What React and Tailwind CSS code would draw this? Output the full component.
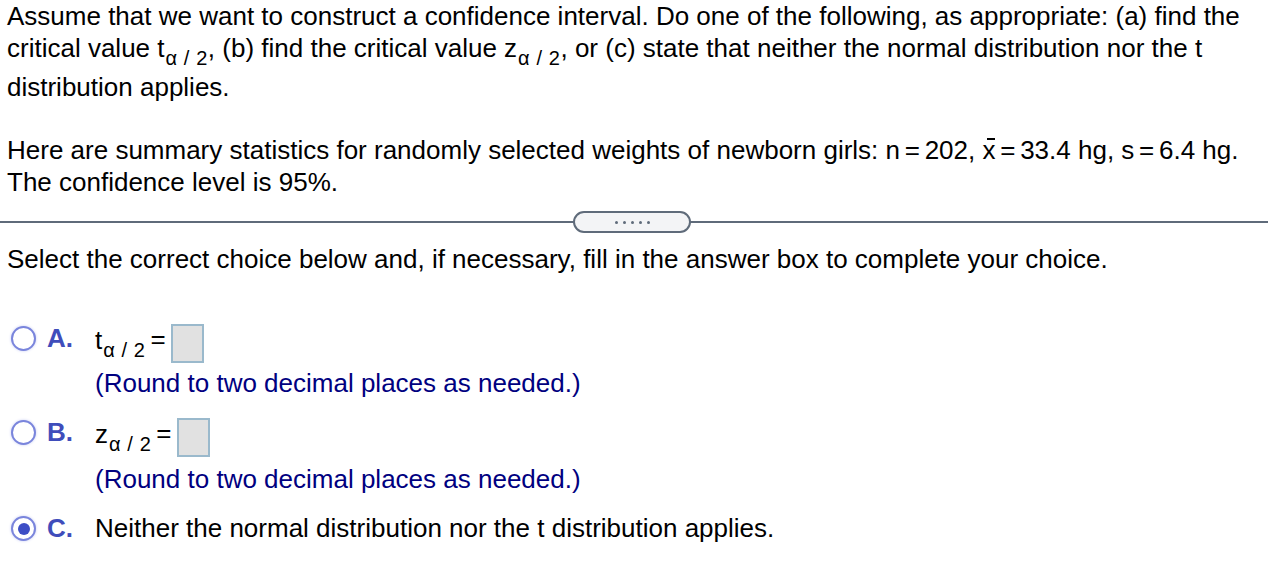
import React from 'react';

const Sub = () => (
  <span className="inline-block text-[20px] leading-none align-[-8px] ml-[1px] tracking-[0.6px]">α / 2</span>
);

const Radio = ({ checked }) => (
  <span className="flex items-center justify-center w-[25px] h-[25px] rounded-full border-2 border-[#7a85dc] bg-white shadow-[0_0_3px_#c9cef3]">
    {checked && <span className="block w-[12px] h-[12px] rounded-full bg-[#3d4ec5]" />}
  </span>
);

const AnswerBox = () => (
  <span className="block w-[33px] h-[39px] border-2 border-[#9ab9cc] bg-[#e1e1e1]" />
);

const Choice = ({ letter, checked, children }) => (
  <div className="flex items-start">
    <div className="flex w-[47px] pl-[11px] pt-[4px]">
      <Radio checked={checked} />
    </div>
    <span className="w-[48px] font-bold text-[#3f4dbb]">{letter}</span>
    <div className="flex flex-col">{children}</div>
  </div>
);

const Eq = () => <span className="[word-spacing:-2.5px]"> = </span>;

const App = () => {
  return (
    <div className="w-[1268px] h-[576px] bg-white text-black font-['Liberation_Sans',Arial,sans-serif] text-[26px] leading-[32px] overflow-hidden">
      <div className="px-[7px] whitespace-nowrap">
        <p>Assume that we want to construct a confidence interval. Do one of the following, as appropriate: (a) find the</p>
        <p className="h-[39px]">
          critical value t<Sub />, (b) find the critical value z<Sub />, or (c) state that neither the normal distribution nor the t
        </p>
        <p>distribution applies.</p>

        <p className="mt-[31px]">
          Here are summary statistics for randomly selected weights of newborn girls: n<Eq />202,{' '}
          <span className="relative inline-block">
            x
            <span className="absolute left-[4px] w-[8px] top-[4px] h-[2px] bg-black" />
          </span>
          <Eq />33.4 hg, s<Eq />6.4 hg.
        </p>
        <p>The confidence level is 95%.</p>
      </div>

      {/* divider */}
      <div className="relative mt-[13px] h-[22px] flex items-center">
        <div className="w-full h-[2px] bg-[#5f6b7a]" />
        <div className="absolute left-[573px] top-0 w-[118px] h-[22px] rounded-full border-2 border-[#5f6b7a] bg-[#f3f4f6] flex items-center justify-center gap-[5px]">
          {[0, 1, 2, 3, 4].map((i) => (
            <span key={i} className="w-[3px] h-[3px] rounded-full bg-[#5f6b7a]" />
          ))}
        </div>
      </div>

      <p className="px-[7px] mt-[10px]">
        Select the correct choice below and, if necessary, fill in the answer box to complete your choice.
      </p>

      <div className="mt-[47px] flex flex-col">
        <Choice letter="A.">
          <div className="flex items-center h-[40px]">
            <span className="leading-[32px]">t<Sub /></span>
            <span className="ml-[5px] mb-[6px]">=</span>
            <span className="ml-[5px] mt-[2px]"><AnswerBox /></span>
          </div>
          <span className="text-[#000080] mt-[5px]">(Round to two decimal places as needed.)</span>
        </Choice>

        <div className="mt-[17px]">
          <Choice letter="B.">
            <div className="flex items-center h-[40px]">
              <span className="leading-[32px]">z<Sub /></span>
              <span className="ml-[5px] mb-[6px]">=</span>
              <span className="ml-[5px] mt-[2px]"><AnswerBox /></span>
            </div>
            <span className="text-[#000080] mt-[7px]">(Round to two decimal places as needed.)</span>
          </Choice>
        </div>

        <div className="mt-[17px]">
          <Choice letter="C." checked>
            <span>Neither the normal distribution nor the t distribution applies.</span>
          </Choice>
        </div>
      </div>
    </div>
  );
};

export default App;
